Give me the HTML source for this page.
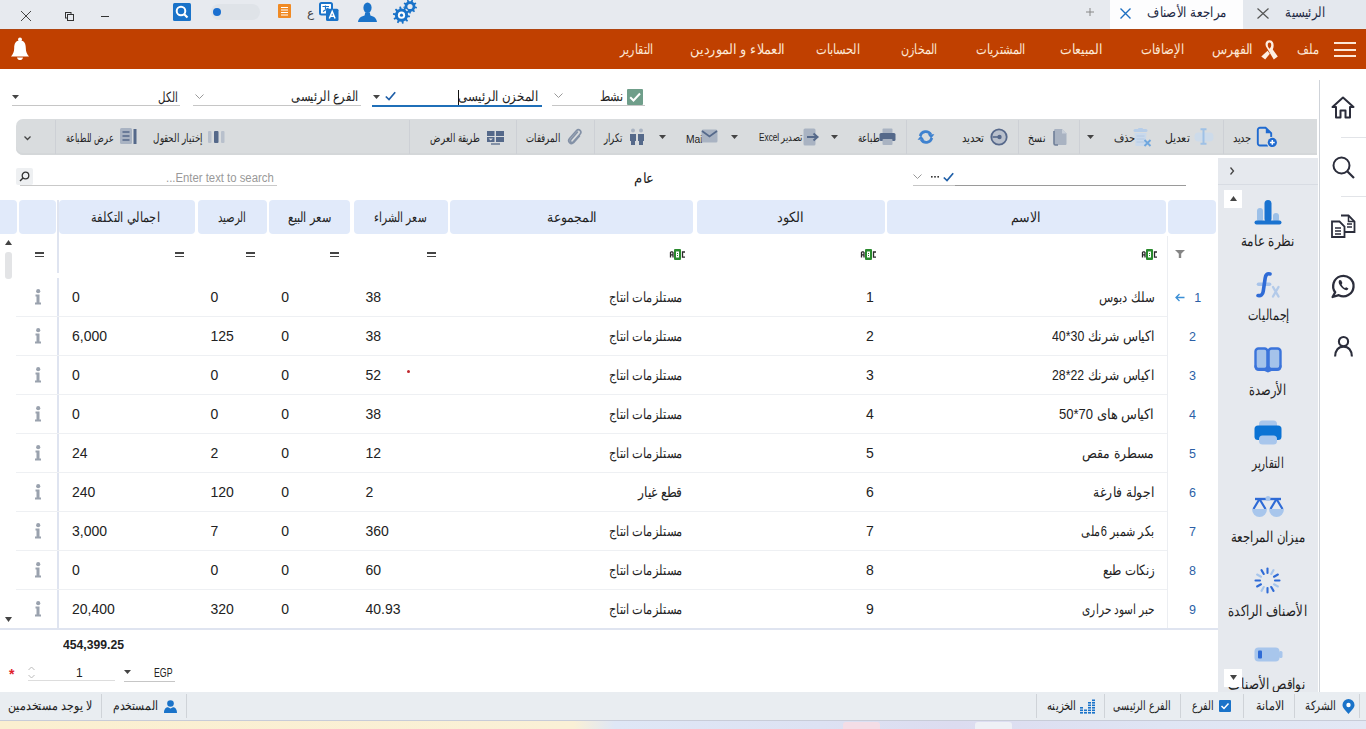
<!DOCTYPE html>
<html lang="ar"><head><meta charset="utf-8"><style>
*{box-sizing:border-box;margin:0;padding:0}
html,body{width:1366px;height:729px;overflow:hidden;background:#fff;font-family:"Liberation Sans",sans-serif;color:#222}
body{position:relative}
.a{position:absolute}
.t{position:absolute;white-space:nowrap;line-height:20px;height:20px}
svg{overflow:visible}
</style></head><body>
<div class="a" style="left:0px;top:0px;width:1366px;height:29px;background:#e7eaef"></div>
<div class="a" style="left:1243px;top:0px;width:123px;height:28px;background:#e4e8ee;border-radius:0 0 0 4px"></div>
<div class="a" style="left:1110px;top:0px;width:133px;height:29px;background:#fdfdfe"></div>
<div class="t" style="left:1285px;top:1.5px;font-size:14px;color:#1f2a44;font-weight:normal;direction:rtl;transform:scaleX(0.8333);transform-origin:0 0;">الرئيسية</div>
<div class="t" style="left:1147px;top:1.5px;font-size:14px;color:#1f2a44;font-weight:normal;direction:rtl;transform:scaleX(0.8431);transform-origin:0 0;">مراجعة الأصناف</div>
<svg class="a" style="left:1257px;top:8px" width="12" height="11" viewBox="0 0 12 11"><path d="M0.5 0.5L11.5 10.5M11.5 0.5L0.5 10.5" stroke="#555" stroke-width="1.2" fill="none"/></svg>
<svg class="a" style="left:1120px;top:8px" width="11" height="11" viewBox="0 0 11 11"><path d="M0.5 0.5L10.5 10.5M10.5 0.5L0.5 10.5" stroke="#1d6fc2" stroke-width="1.4" fill="none"/></svg>
<svg class="a" style="left:1086px;top:8px" width="8" height="8" viewBox="0 0 8 8"><path d="M4 0V8M0 4H8" stroke="#888" stroke-width="1" fill="none"/></svg>
<svg class="a" style="left:21px;top:11px" width="10" height="10" viewBox="0 0 10 10"><path d="M0 0L10 10M10 0L0 10" stroke="#444" stroke-width="1" fill="none"/></svg>
<svg class="a" style="left:65px;top:12px" width="9" height="9" viewBox="0 0 9 9"><rect x="0.5" y="0.5" width="5.5" height="5.5" fill="none" stroke="#333" stroke-width="1"/><rect x="2.5" y="2.5" width="6" height="6" fill="#e7eaef" stroke="#333" stroke-width="1"/></svg>
<div class="a" style="left:101px;top:15.5px;width:8px;height:1px;background:#333"></div>
<svg class="a" style="left:173px;top:3px" width="18" height="18" viewBox="0 0 18 18"><rect width="18" height="18" rx="1.5" fill="#1a73c9"/><circle cx="8" cy="8" r="4.3" fill="none" stroke="#fff" stroke-width="2"/><path d="M11 11L14.5 14.5" stroke="#fff" stroke-width="2.2"/></svg>
<div class="a" style="left:211px;top:4px;width:49px;height:16px;background:#dfe3e8;border-radius:8px"></div>
<div class="a" style="left:213px;top:8px;width:8px;height:8px;background:#1a6fd0;border-radius:50%"></div>
<svg class="a" style="left:278px;top:4px" width="13" height="14" viewBox="0 0 13 14"><rect width="13" height="14" rx="1" fill="#f08a24"/><path d="M3 3.5H10M3 6H10M3 8.5H10M3 11H10" stroke="#fff" stroke-width="1.1"/></svg>
<div class="t" style="left:307px;top:3.0px;font-size:12px;color:#444;font-weight:normal;direction:rtl;">ع</div>
<svg class="a" style="left:319px;top:2px" width="20" height="20" viewBox="0 0 20 20"><rect x="1" y="1" width="12" height="11.5" rx="1.5" fill="#fff" stroke="#1a73c9" stroke-width="2"/><path d="M3.5 4.5H10M6.5 3.5V7M4 9.5L9.5 6" stroke="#1a73c9" stroke-width="1.2" fill="none"/><rect x="7" y="6.8" width="12.5" height="12.2" rx="1.5" fill="#1a73c9"/><path d="M10.3 16.5L13.2 9.5L16.1 16.5M11.3 14.2H15.1" stroke="#fff" stroke-width="1.5" fill="none"/></svg>
<svg class="a" style="left:358px;top:2px" width="19" height="20" viewBox="0 0 19 20"><ellipse cx="9.5" cy="5.8" rx="4.1" ry="5.2" fill="#1a73c9"/><path d="M0 20C0.4 16.2 2.6 14.6 6.6 13.4L7.2 10.5H11.8L12.4 13.4C16.4 14.6 18.6 16.2 19 20Z" fill="#1a73c9"/></svg>
<svg class="a" style="left:393px;top:0px" width="25" height="24" viewBox="0 0 25 24"><path d="M22.40 6.50L23.98 6.99L23.73 8.43L22.07 8.35L21.14 9.97L22.04 11.36L20.91 12.30L19.70 11.18L17.94 11.82L17.73 13.46L16.27 13.46L16.06 11.82L14.30 11.18L13.09 12.30L11.96 11.36L12.86 9.97L11.93 8.35L10.27 8.43L10.02 6.99L11.60 6.50L11.93 4.65L10.61 3.65L11.34 2.39L12.86 3.03L14.30 1.82L13.93 0.21L15.31 -0.29L16.06 1.18L17.94 1.18L18.69 -0.29L20.07 0.21L19.70 1.82L21.14 3.03L22.66 2.39L23.39 3.65L22.07 4.65Z" fill="#1a73c9"/><circle cx="17" cy="6.5" r="2.6" fill="#e7eaef"/><circle cx="8.5" cy="15.2" r="8" fill="#e7eaef"/><path d="M15.10 15.20L17.08 15.74L16.83 17.34L14.78 17.24L13.84 19.08L15.13 20.68L13.98 21.83L12.38 20.54L10.54 21.48L10.64 23.53L9.04 23.78L8.50 21.80L6.46 21.48L5.33 23.20L3.89 22.46L4.62 20.54L3.16 19.08L1.24 19.81L0.50 18.37L2.22 17.24L1.90 15.20L-0.08 14.66L0.17 13.06L2.22 13.16L3.16 11.32L1.87 9.72L3.02 8.57L4.62 9.86L6.46 8.92L6.36 6.87L7.96 6.62L8.50 8.60L10.54 8.92L11.67 7.20L13.11 7.94L12.38 9.86L13.84 11.32L15.76 10.59L16.50 12.03L14.78 13.16Z" fill="#1a73c9"/><circle cx="8.5" cy="15.2" r="3.6" fill="#fff"/><circle cx="8.5" cy="15.2" r="1.6" fill="#1a73c9"/></svg>
<div class="a" style="left:0px;top:29px;width:1366px;height:40px;background:#c04000"></div>
<div class="a" style="left:0px;top:29px;width:1366px;height:1px;background:#b04510"></div>
<div class="t" style="left:1297px;top:38.5px;font-size:14px;color:#fde8d6;font-weight:normal;direction:rtl;transform:scaleX(0.8214);transform-origin:0 0;">ملف</div>
<div class="t" style="left:1212px;top:38.5px;font-size:14px;color:#fde8d6;font-weight:normal;direction:rtl;transform:scaleX(0.8913);transform-origin:0 0;">الفهرس</div>
<div class="t" style="left:1141px;top:38.5px;font-size:14px;color:#fde8d6;font-weight:normal;direction:rtl;transform:scaleX(0.8269);transform-origin:0 0;">الإضافات</div>
<div class="t" style="left:1060px;top:38.5px;font-size:14px;color:#fde8d6;font-weight:normal;direction:rtl;transform:scaleX(0.8854);transform-origin:0 0;">المبيعات</div>
<div class="t" style="left:976px;top:38.5px;font-size:14px;color:#fde8d6;font-weight:normal;direction:rtl;transform:scaleX(0.8131);transform-origin:0 0;">المشتريات</div>
<div class="t" style="left:901px;top:38.5px;font-size:14px;color:#fde8d6;font-weight:normal;direction:rtl;transform:scaleX(0.7935);transform-origin:0 0;">المخازن</div>
<div class="t" style="left:816px;top:38.5px;font-size:14px;color:#fde8d6;font-weight:normal;direction:rtl;transform:scaleX(0.8148);transform-origin:0 0;">الحسابات</div>
<div class="t" style="left:690px;top:38.5px;font-size:14px;color:#fde8d6;font-weight:normal;direction:rtl;transform:scaleX(0.9154);transform-origin:0 0;">العملاء و الموردين</div>
<div class="t" style="left:620px;top:38.5px;font-size:14px;color:#fde8d6;font-weight:normal;direction:rtl;transform:scaleX(0.7857);transform-origin:0 0;">التقارير</div>
<div class="a" style="left:1334px;top:42px;width:22px;height:2px;background:#fde8d6"></div>
<div class="a" style="left:1334px;top:48.5px;width:22px;height:2px;background:#fde8d6"></div>
<div class="a" style="left:1334px;top:55px;width:22px;height:2px;background:#fde8d6"></div>
<svg class="a" style="left:1261px;top:39px" width="17" height="21" viewBox="0 0 17 21"><path d="M8.5 1.2C4.8 1.2 3.8 4.5 5 7.5L12.8 20.5L16.8 17.5L11.8 10.5C13.5 6.5 12.8 1.2 8.5 1.2ZM8.5 3.6C10.3 3.6 10.6 6 9.8 8L8.5 9.8L7.2 8C6.4 6 6.7 3.6 8.5 3.6Z" fill="#fdeee2" fill-rule="evenodd"/><path d="M6.6 11.8L0.3 17.5L4.2 20.5L8.8 14.8Z" fill="#fdeee2"/></svg>
<svg class="a" style="left:10px;top:37px" width="20" height="24" viewBox="0 0 20 24"><circle cx="10" cy="2.6" r="2" fill="#fff"/><path d="M10 3.5C5.5 3.5 4.2 7 4.2 11C4.2 15 3 17 1 19.5H19C17 17 15.8 15 15.8 11C15.8 7 14.5 3.5 10 3.5Z" fill="#fff"/><path d="M7 20.5H13C12.5 22.5 11.5 23 10 23C8.5 23 7.5 22.5 7 20.5Z" fill="#fff"/></svg>
<div class="a" style="left:1319px;top:80px;width:1px;height:612px;background:#cfd3d9"></div>
<svg class="a" style="left:1331px;top:96px" width="24" height="23" viewBox="0 0 24 23"><path d="M12 1.5L1.5 11H5V21.5H9.5V14.5H14.5V21.5H19V11H22.5Z" fill="none" stroke="#2b2d3b" stroke-width="2" stroke-linejoin="round"/></svg>
<div class="a" style="left:1341px;top:137px;width:25px;height:1px;background:#e2e4e8"></div>
<svg class="a" style="left:1332px;top:156px" width="23" height="23" viewBox="0 0 23 23"><circle cx="9.5" cy="9.5" r="8" fill="none" stroke="#2b2d3b" stroke-width="2"/><path d="M15.5 15.5L22 22" stroke="#2b2d3b" stroke-width="2.2"/></svg>
<div class="a" style="left:1341px;top:196px;width:25px;height:1px;background:#e2e4e8"></div>
<svg class="a" style="left:1331px;top:214px" width="25" height="24" viewBox="0 0 25 24"><path d="M10 1.5H17.5L23.5 7.5V18H14" fill="none" stroke="#2b2d3b" stroke-width="1.8"/><path d="M17.5 1.5V7.5H23.5" fill="none" stroke="#2b2d3b" stroke-width="1.5"/><path d="M1 7.5H8.5L13.5 12.5V23H1Z" fill="#fff" stroke="#2b2d3b" stroke-width="1.8"/><path d="M4 14H10M4 17H10M4 20H10M16 10H21M16 13H21" stroke="#2b2d3b" stroke-width="1.4"/></svg>
<svg class="a" style="left:1331px;top:274px" width="25" height="24" viewBox="0 0 25 24"><path d="M4.2 18.2A10.2 10.2 0 1 1 7.8 21.2L1.6 23Z" fill="none" stroke="#2b2d3b" stroke-width="2.3" stroke-linejoin="round"/><path d="M8.3 6.2C7.5 7 7.2 8.8 9 11.6C10.8 14.4 13.6 16.4 15.6 16.2C16.6 16.1 17.3 15.3 17.4 14.6L15.3 13.2L13.9 14C12.4 13.2 11.2 11.8 10.6 10.4L11.4 9.1L10.3 6.6C9.8 6 8.8 5.8 8.3 6.2Z" fill="#2b2d3b"/></svg>
<svg class="a" style="left:1334px;top:336px" width="19" height="21" viewBox="0 0 19 21"><circle cx="9.5" cy="5.6" r="4.6" fill="none" stroke="#2b2d3b" stroke-width="2.1"/><path d="M1.1 20.5C1.1 14.5 4.5 10.6 9.5 10.6C14.5 10.6 17.9 14.5 17.9 20.5" fill="none" stroke="#2b2d3b" stroke-width="2.1"/></svg>
<div class="a" style="left:627px;top:89px;width:16px;height:16px;background:#6f9e8a;border-radius:1px"></div>
<svg class="a" style="left:627px;top:89px" width="16" height="16" viewBox="0 0 16 16"><path d="M3.2 8.2L6.5 11.5L13 4.5" fill="none" stroke="#fff" stroke-width="2"/></svg>
<div class="t" style="left:600px;top:85.5px;font-size:14px;color:#222;font-weight:normal;direction:rtl;transform:scaleX(0.7931);transform-origin:0 0;">نشط</div>
<div class="a" style="left:552px;top:105px;width:93px;height:1px;background:#c6c6c6"></div>
<svg class="a" style="left:554px;top:93px" width="9" height="5" viewBox="0 0 9 5"><path d="M0.5 0.5L4.5 4.5L8.5 0.5" fill="none" stroke="#999" stroke-width="1"/></svg>
<div class="t" style="left:458px;top:85.5px;font-size:14px;color:#222;font-weight:normal;direction:rtl;transform:scaleX(0.8431);transform-origin:0 0;">المخزن الرئيسى</div>
<div class="a" style="left:458px;top:90px;width:1px;height:15px;background:#111"></div>
<div class="a" style="left:372px;top:105px;width:170px;height:2px;background:#1f6fb8"></div>
<svg class="a" style="left:373px;top:95px" width="7" height="4" viewBox="0 0 7 4"><path d="M0 0H7L3.5 4Z" fill="#444"/></svg>
<svg class="a" style="left:385px;top:91px" width="11" height="10" viewBox="0 0 11 10"><path d="M0.8 5.5L4 8.5L10.2 1.2" fill="none" stroke="#1f5fa8" stroke-width="1.7"/></svg>
<div class="t" style="left:291px;top:85.9px;font-size:14px;color:#222;font-weight:normal;direction:rtl;transform:scaleX(0.8083);transform-origin:0 0;">الفرع الرئيسى</div>
<div class="a" style="left:193px;top:105px;width:168px;height:1px;background:#c6c6c6"></div>
<svg class="a" style="left:195px;top:94px" width="9" height="5" viewBox="0 0 9 5"><path d="M0.5 0.5L4.5 4.5L8.5 0.5" fill="none" stroke="#999" stroke-width="1"/></svg>
<div class="t" style="left:157.6px;top:86.5px;font-size:14px;color:#222;font-weight:normal;direction:rtl;transform:scaleX(0.7296);transform-origin:0 0;">الكل</div>
<div class="a" style="left:12px;top:105px;width:168px;height:1px;background:#c6c6c6"></div>
<svg class="a" style="left:12px;top:95px" width="7" height="4" viewBox="0 0 7 4"><path d="M0 0H7L3.5 4Z" fill="#444"/></svg>
<div class="a" style="left:16px;top:119px;width:1301px;height:36px;background:#d9dcde;border-radius:7px 0 0 7px;box-shadow:inset 0 -2px 0 #d4d7d9"></div>
<div class="a" style="left:55px;top:120px;width:1px;height:34px;background:#cdd0d5"></div>
<div class="a" style="left:409px;top:120px;width:1px;height:34px;background:#cdd0d5"></div>
<div class="a" style="left:516px;top:120px;width:1px;height:34px;background:#cdd0d5"></div>
<div class="a" style="left:594px;top:120px;width:1px;height:34px;background:#cdd0d5"></div>
<div class="a" style="left:906px;top:120px;width:1px;height:34px;background:#cdd0d5"></div>
<div class="a" style="left:1018px;top:120px;width:1px;height:34px;background:#cdd0d5"></div>
<div class="a" style="left:1079px;top:120px;width:1px;height:34px;background:#cdd0d5"></div>
<div class="a" style="left:1223px;top:120px;width:1px;height:34px;background:#cdd0d5"></div>
<div class="t" style="left:1233px;top:127.6px;font-size:12px;color:#222;font-weight:normal;direction:rtl;transform:scaleX(0.8182);transform-origin:0 0;">جديد</div>
<div class="t" style="left:1164.6px;top:127.6px;font-size:12px;color:#222;font-weight:normal;direction:rtl;transform:scaleX(0.9037);transform-origin:0 0;">تعديل</div>
<div class="t" style="left:1114px;top:127.6px;font-size:12px;color:#222;font-weight:normal;direction:rtl;transform:scaleX(0.8280);transform-origin:0 0;">حذف</div>
<div class="t" style="left:1027.8px;top:127.6px;font-size:12px;color:#222;font-weight:normal;direction:rtl;transform:scaleX(0.7818);transform-origin:0 0;">نسخ</div>
<div class="t" style="left:961.8px;top:127.6px;font-size:12px;color:#222;font-weight:normal;direction:rtl;transform:scaleX(0.8423);transform-origin:0 0;">تحديد</div>
<div class="t" style="left:858px;top:127.6px;font-size:12px;color:#222;font-weight:normal;direction:rtl;transform:scaleX(0.7097);transform-origin:0 0;">طباعة</div>
<div class="t" style="left:758.5px;top:127.1px;font-size:11px;color:#222;font-weight:normal;direction:rtl;transform:scaleX(0.7504);transform-origin:0 0;">تصدير Excel</div>
<div class="t" style="left:686.4px;top:128.6px;font-size:11px;color:#222;font-weight:normal;transform:scaleX(0.9360);transform-origin:0 0;">Mai</div>
<div class="t" style="left:603.6px;top:127.6px;font-size:12px;color:#222;font-weight:normal;direction:rtl;transform:scaleX(0.7000);transform-origin:0 0;">تكرار</div>
<div class="t" style="left:525.6px;top:127.6px;font-size:12px;color:#222;font-weight:normal;direction:rtl;transform:scaleX(0.7167);transform-origin:0 0;">المرفقات</div>
<div class="t" style="left:430px;top:127.6px;font-size:12px;color:#222;font-weight:normal;direction:rtl;transform:scaleX(0.7179);transform-origin:0 0;">طريقة العرض</div>
<div class="t" style="left:152.8px;top:127.6px;font-size:12px;color:#222;font-weight:normal;direction:rtl;transform:scaleX(0.7306);transform-origin:0 0;">إختيار الحقول</div>
<div class="t" style="left:65.6px;top:127.6px;font-size:12px;color:#222;font-weight:normal;direction:rtl;transform:scaleX(0.6714);transform-origin:0 0;">عرض للطباعة</div>
<svg class="a" style="left:1087px;top:135px" width="7" height="4" viewBox="0 0 7 4"><path d="M0 0H7L3.5 4Z" fill="#444"/></svg>
<svg class="a" style="left:831px;top:135px" width="7" height="4" viewBox="0 0 7 4"><path d="M0 0H7L3.5 4Z" fill="#444"/></svg>
<svg class="a" style="left:731px;top:135px" width="7" height="4" viewBox="0 0 7 4"><path d="M0 0H7L3.5 4Z" fill="#444"/></svg>
<svg class="a" style="left:659px;top:135px" width="7" height="4" viewBox="0 0 7 4"><path d="M0 0H7L3.5 4Z" fill="#444"/></svg>
<svg class="a" style="left:24px;top:136px" width="7" height="5" viewBox="0 0 7 5"><path d="M0.5 0.5L3.5 3.5L6.5 0.5" fill="none" stroke="#444" stroke-width="1.3"/></svg>
<svg class="a" style="left:1256px;top:126px" width="22" height="22" viewBox="0 0 22 22"><path d="M12 19.5H4C2.8 19.5 1.8 18.5 1.8 17.3V4C1.8 2.8 2.8 1.8 4 1.8H9.8L15.2 7.2V11" fill="none" stroke="#1f6ad0" stroke-width="1.9" stroke-linejoin="round"/><path d="M9.8 1.8V7.2H15.2Z" fill="#1f6ad0"/><circle cx="16.3" cy="16.4" r="5.6" fill="#d9dcde"/><circle cx="16.3" cy="16.4" r="4.6" fill="#1f6ad0"/><path d="M16.3 14V18.8M13.9 16.4H18.7" stroke="#fff" stroke-width="1.5"/></svg>
<svg class="a" style="left:1194px;top:128px" width="20" height="17" viewBox="0 0 20 17"><rect x="0.5" y="4.5" width="19" height="9" rx="4" fill="#cddbea"/><path d="M9.5 1.5V15.5M6.5 1.2H12.5M6.5 15.8H12.5" stroke="#9fc1e6" stroke-width="2"/></svg>
<svg class="a" style="left:1133px;top:128px" width="19" height="20" viewBox="0 0 19 20"><rect x="0.5" y="1" width="14" height="3" rx="1.5" fill="#b6cde8"/><rect x="5" y="0" width="5" height="2" rx="1" fill="#b6cde8"/><path d="M1.5 5H13.5L12.5 18H2.5Z" fill="#c9d9ec"/><path d="M3.5 8H11.5M3.5 11H11.5M3.5 14H11.5" stroke="#b4c9e2" stroke-width="1"/><path d="M11.5 12L17.5 18M17.5 12L11.5 18" stroke="#6fa7de" stroke-width="1.9"/></svg>
<svg class="a" style="left:1053px;top:128px" width="14" height="18" viewBox="0 0 14 18"><path d="M2.5 1H9L13.5 5.5V15.5C13.5 16.5 13 17 12 17H2.5C1.5 17 1 16.5 1 15.5V2.5C1 1.5 1.5 1 2.5 1Z" fill="#a9b3c2"/><path d="M1 3V15.5C1 16.5 1.5 17 2.5 17H5" fill="none" stroke="#6f7f98" stroke-width="1.6"/><path d="M9 1V5.5H13.5" fill="#c9d0d9"/></svg>
<svg class="a" style="left:990px;top:128px" width="18" height="18" viewBox="0 0 18 18"><circle cx="9" cy="9" r="7.7" fill="#b9c0cc" stroke="#56688a" stroke-width="1.8"/><circle cx="9.5" cy="9" r="2.2" fill="#56688a"/><path d="M2.5 8.2H9.5V9.8H2.5Z" fill="#56688a"/></svg>
<svg class="a" style="left:917px;top:129px" width="18" height="16" viewBox="0 0 18 16"><path d="M3.2 7A5.8 5.8 0 0 1 13.8 5.5" fill="none" stroke="#3f82cf" stroke-width="2.8"/><path d="M10.8 5.2H17.4L14.1 9.6Z" fill="#3f82cf"/><path d="M14.8 9A5.8 5.8 0 0 1 4.2 10.5" fill="none" stroke="#3f82cf" stroke-width="2.8"/><path d="M0.6 10.8H7.2L3.9 6.4Z" fill="#3f82cf"/></svg>
<svg class="a" style="left:879px;top:128px" width="17" height="18" viewBox="0 0 17 18"><rect x="3.5" y="0.5" width="10" height="5" rx="1" fill="#a9b3c2"/><rect x="0.5" y="5" width="16" height="8" rx="1.5" fill="#55698a"/><rect x="3.5" y="11" width="10" height="6" rx="1" fill="#a9b3c2"/></svg>
<svg class="a" style="left:803px;top:128px" width="16" height="18" viewBox="0 0 16 18"><rect x="0.5" y="0.5" width="12" height="17" rx="1.5" fill="#a9b3c2"/><path d="M4 9H13M10.5 5.5L14.5 9L10.5 12.5" fill="none" stroke="#55698a" stroke-width="2"/></svg>
<svg class="a" style="left:701px;top:129px" width="17" height="14" viewBox="0 0 17 14"><rect x="0.5" y="0.5" width="16" height="13" rx="1.5" fill="#a9b3c2"/><path d="M1 2L8.5 7.5L16 2" fill="none" stroke="#55698a" stroke-width="1.8"/></svg>
<svg class="a" style="left:629px;top:128px" width="16" height="18" viewBox="0 0 16 18"><circle cx="4" cy="2.5" r="2" fill="#a9b3c2"/><circle cx="12" cy="2.5" r="2" fill="#a9b3c2"/><path d="M1 6H7V13H6V17H2V13H1Z" fill="#55698a"/><path d="M9 6H15V13H14V17H10V13H9Z" fill="#55698a"/></svg>
<svg class="a" style="left:567px;top:128px" width="16" height="18" viewBox="0 0 16 18"><path d="M10.5 4L4 11.5C2.5 13.3 4.5 15.5 6.3 13.8L13 6.3C15.5 3.5 12 0 9.3 2.7L2.5 10.5C0 13.5 3.8 17.5 6.8 14.5L12.5 8" fill="none" stroke="#8391a6" stroke-width="1.6" stroke-linecap="round"/></svg>
<svg class="a" style="left:487px;top:131px" width="17" height="14" viewBox="0 0 17 14"><rect x="0" y="0" width="7.5" height="5" fill="#55698a"/><rect x="9" y="0" width="8" height="5" fill="#55698a"/><rect x="0" y="6" width="7.5" height="5" fill="#55698a"/><rect x="9" y="6" width="8" height="5" fill="#55698a"/><rect x="4" y="12" width="9" height="2" fill="#8391a6"/><path d="M1.5 7.5H6L3.75 9.5Z" fill="#dcdfe3"/></svg>
<svg class="a" style="left:120px;top:128px" width="17" height="16" viewBox="0 0 17 16"><rect x="0" y="0" width="12" height="16" rx="1.5" fill="#a9b3c2"/><path d="M2.5 4H9.5M2.5 8H9.5M2.5 12H9.5" stroke="#55698a" stroke-width="1.6"/><rect x="13.5" y="1" width="3" height="15" fill="#55698a"/></svg>
<svg class="a" style="left:208px;top:131px" width="17" height="12" viewBox="0 0 17 12"><rect x="0" y="0" width="3.5" height="12" rx="1" fill="#b8c0cc"/><rect x="6" y="0" width="4.5" height="12" rx="1" fill="#55698a"/><rect x="13" y="0" width="3.5" height="12" rx="1" fill="#b8c0cc"/></svg>
<div class="a" style="left:16px;top:168px;width:17px;height:17px;background:#eef0f2;border-radius:2px"></div>
<svg class="a" style="left:19px;top:171px" width="11" height="11" viewBox="0 0 11 11"><circle cx="6.5" cy="4.5" r="3.3" fill="none" stroke="#333" stroke-width="1.3"/><path d="M4 7L1 10" stroke="#333" stroke-width="1.5"/></svg>
<div class="t" style="left:166px;top:167.5px;font-size:12px;color:#999;font-weight:normal;direction:rtl;transform:scaleX(0.9441);transform-origin:0 0;">Enter text to search...</div>
<div class="a" style="left:20px;top:185px;width:257px;height:1px;background:#c9c9c9"></div>
<div class="t" style="left:633.7px;top:167.5px;font-size:14px;color:#222;font-weight:normal;direction:rtl;transform:scaleX(0.9476);transform-origin:0 0;">عام</div>
<div class="a" style="left:913px;top:185px;width:273px;height:1px;background:#c6c6c6"></div>
<div class="a" style="left:955px;top:185px;width:231px;height:1.2px;background:#9a9a9a"></div>
<svg class="a" style="left:913px;top:174px" width="9" height="5" viewBox="0 0 9 5"><path d="M0.5 0.5L4.5 4.5L8.5 0.5" fill="none" stroke="#999" stroke-width="1"/></svg>
<svg class="a" style="left:931px;top:176px" width="8" height="2" viewBox="0 0 8 2"><rect x="0" y="0" width="1.6" height="1.6" fill="#333"/><rect x="3.2" y="0" width="1.6" height="1.6" fill="#333"/><rect x="6.4" y="0" width="1.6" height="1.6" fill="#333"/></svg>
<svg class="a" style="left:943px;top:172px" width="11" height="10" viewBox="0 0 11 10"><path d="M0.8 5.5L4 8.5L10.2 1.2" fill="none" stroke="#1f5fa8" stroke-width="1.7"/></svg>
<div class="a" style="left:1218px;top:158px;width:100px;height:534px;background:#e6e9ee"></div>
<div class="a" style="left:1218px;top:184px;width:100px;height:1px;background:#d8dce3"></div>
<svg class="a" style="left:1230px;top:167px" width="4" height="8" viewBox="0 0 4 8"><path d="M0.5 0.5L3.5 4L0.5 7.5" fill="none" stroke="#444" stroke-width="1.3"/></svg>
<div class="a" style="left:1224px;top:190px;width:18px;height:18px;background:#fff"></div>
<svg class="a" style="left:1230px;top:196px" width="7" height="5" viewBox="0 0 7 5"><path d="M0 5H7L3.5 0Z" fill="#444"/></svg>
<div class="t" style="left:1241px;top:231.4px;font-size:15px;color:#222;font-weight:normal;direction:rtl;transform:scaleX(0.8009);transform-origin:0 0;">نظرة عامة</div>
<div class="t" style="left:1247.6px;top:305.4px;font-size:15px;color:#222;font-weight:normal;direction:rtl;transform:scaleX(0.7393);transform-origin:0 0;">إجماليات</div>
<div class="t" style="left:1249px;top:379.6px;font-size:15px;color:#222;font-weight:normal;direction:rtl;transform:scaleX(0.7551);transform-origin:0 0;">الأرصدة</div>
<div class="t" style="left:1251.6px;top:453.0px;font-size:15px;color:#222;font-weight:normal;direction:rtl;transform:scaleX(0.6891);transform-origin:0 0;">التقارير</div>
<div class="t" style="left:1231.2px;top:527.2px;font-size:15px;color:#222;font-weight:normal;direction:rtl;transform:scaleX(0.7837);transform-origin:0 0;">ميزان المراجعة</div>
<div class="t" style="left:1228.3px;top:600.6px;font-size:15px;color:#222;font-weight:normal;direction:rtl;transform:scaleX(0.7856);transform-origin:0 0;">الأصناف الراكدة</div>
<div class="t" style="left:1228.3px;top:674.0px;font-size:15px;color:#222;font-weight:normal;direction:rtl;transform:scaleX(0.7893);transform-origin:0 0;">نواقص الأصناف</div>
<div class="a" style="left:1224px;top:669px;width:18px;height:18px;background:#fff"></div>
<svg class="a" style="left:1230px;top:675px" width="7" height="5" viewBox="0 0 7 5"><path d="M0 0H7L3.5 5Z" fill="#444"/></svg>
<svg class="a" style="left:1254px;top:199px" width="28" height="26" viewBox="0 0 28 26"><rect x="3" y="9" width="6" height="14" rx="3" fill="#9cc0e8"/><rect x="19" y="14" width="6" height="9" rx="3" fill="#9cc0e8"/><rect x="10.5" y="1" width="7" height="22" rx="3.5" fill="#1a73d0"/><rect x="0.5" y="21.5" width="27" height="4" rx="2" fill="#1a73d0"/></svg>
<svg class="a" style="left:1255px;top:271px" width="26" height="27" viewBox="0 0 26 27"><path d="M3.5 13.3H14.5" stroke="#a9c4ea" stroke-width="3.6" stroke-linecap="round"/><path d="M15 3C12 2.2 10.6 4 10.2 7L8.2 20.5C7.8 23.5 6 25 3 24.5" fill="none" stroke="#2f6bd6" stroke-width="3.6" stroke-linecap="round"/><path d="M18 16L23.5 25.5M23.5 16L18 25.5" stroke="#b3cae9" stroke-width="2.4" stroke-linecap="round"/></svg>
<svg class="a" style="left:1254px;top:347px" width="28" height="25" viewBox="0 0 28 25"><rect x="1.5" y="1.5" width="12" height="20.5" rx="3" fill="#a5c3ea" stroke="#3b74db" stroke-width="2.4"/><rect x="14.5" y="1.5" width="12" height="20.5" rx="3" fill="#a5c3ea" stroke="#3b74db" stroke-width="2.4"/><path d="M1.5 18.5C1.5 22 3 22.8 5 22.8H11L14 24.2L17 22.8H23C25 22.8 26.5 22 26.5 18.5" fill="none" stroke="#3b74db" stroke-width="2.4"/><path d="M14 2V23" stroke="#3b74db" stroke-width="2.4"/></svg>
<svg class="a" style="left:1254px;top:420px" width="28" height="25" viewBox="0 0 28 25"><rect x="5" y="0.5" width="18" height="9" rx="3.5" fill="#a8c6ec"/><rect x="0.5" y="5.5" width="27" height="14.5" rx="3.5" fill="#0b73d4"/><rect x="5" y="15.5" width="18" height="9" rx="3.5" fill="#a8c6ec"/></svg>
<svg class="a" style="left:1251px;top:496px" width="34" height="23" viewBox="0 0 34 23"><path d="M4 3H30" stroke="#2f6bd6" stroke-width="2.4"/><circle cx="17" cy="2.5" r="2.5" fill="#a8c6ec"/><path d="M8.5 3L2.5 13M8.5 3L14.5 13M25.5 3L19.5 13M25.5 3L31.5 13" stroke="#2f6bd6" stroke-width="2.2"/><path d="M1 13H16A7.5 8 0 0 1 1 13Z" fill="#a8c6ec"/><path d="M18 13H33A7.5 8 0 0 1 18 13Z" fill="#a8c6ec"/></svg>
<svg class="a" style="left:1254px;top:568px" width="27" height="25" viewBox="0 0 27 25"><path d="M21.00 12.50L25.50 12.50" stroke="#2f6bd6" stroke-width="2.1" stroke-linecap="round"/><path d="M20.00 16.25L23.89 18.50" stroke="#a8c6ec" stroke-width="2.1" stroke-linecap="round"/><path d="M17.25 19.00L19.50 22.89" stroke="#2f6bd6" stroke-width="2.1" stroke-linecap="round"/><path d="M13.50 20.00L13.50 24.50" stroke="#2f6bd6" stroke-width="2.1" stroke-linecap="round"/><path d="M9.75 19.00L7.50 22.89" stroke="#a8c6ec" stroke-width="2.1" stroke-linecap="round"/><path d="M7.00 16.25L3.11 18.50" stroke="#2f6bd6" stroke-width="2.1" stroke-linecap="round"/><path d="M6.00 12.50L1.50 12.50" stroke="#2f6bd6" stroke-width="2.1" stroke-linecap="round"/><path d="M7.00 8.75L3.11 6.50" stroke="#a8c6ec" stroke-width="2.1" stroke-linecap="round"/><path d="M9.75 6.00L7.50 2.11" stroke="#2f6bd6" stroke-width="2.1" stroke-linecap="round"/><path d="M13.50 5.00L13.50 0.50" stroke="#2f6bd6" stroke-width="2.1" stroke-linecap="round"/><path d="M17.25 6.00L19.50 2.11" stroke="#a8c6ec" stroke-width="2.1" stroke-linecap="round"/><path d="M20.00 8.75L23.89 6.50" stroke="#2f6bd6" stroke-width="2.1" stroke-linecap="round"/></svg>
<svg class="a" style="left:1254px;top:647px" width="29" height="15" viewBox="0 0 29 15"><rect x="0.5" y="0.5" width="25" height="14" rx="4" fill="#a8c6ec"/><rect x="25" y="4" width="3.5" height="7" rx="1.5" fill="#a8c6ec"/><rect x="4" y="3.5" width="4" height="8" rx="1" fill="#2f6bd6"/></svg>
<div class="a" style="left:0px;top:200px;width:17px;height:34px;background:#e1eafa;border-radius:0 4px 4px 0"></div>
<div class="a" style="left:18.5px;top:200px;width:37.0px;height:34px;background:#e1eafa;border-radius:4px"></div>
<div class="a" style="left:59px;top:200px;width:136px;height:34px;background:#e1eafa;border-radius:4px"></div>
<div class="a" style="left:198px;top:200px;width:68.69999999999999px;height:34px;background:#e1eafa;border-radius:4px"></div>
<div class="a" style="left:269px;top:200px;width:81px;height:34px;background:#e1eafa;border-radius:4px"></div>
<div class="a" style="left:353.5px;top:200px;width:94.5px;height:34px;background:#e1eafa;border-radius:4px"></div>
<div class="a" style="left:450px;top:200px;width:243px;height:34px;background:#e1eafa;border-radius:4px"></div>
<div class="a" style="left:696.5px;top:200px;width:188.0px;height:34px;background:#e1eafa;border-radius:4px"></div>
<div class="a" style="left:887px;top:200px;width:279px;height:34px;background:#e1eafa;border-radius:4px"></div>
<div class="a" style="left:1168px;top:200px;width:48px;height:34px;background:#e1eafa;border-radius:4px"></div>
<div class="t" style="left:90.7px;top:207.3px;font-size:14px;color:#222;font-weight:normal;direction:rtl;transform:scaleX(0.8116);transform-origin:0 0;">اجمالي التكلفة</div>
<div class="t" style="left:218px;top:207.3px;font-size:14px;color:#222;font-weight:normal;direction:rtl;transform:scaleX(0.7179);transform-origin:0 0;">الرصيد</div>
<div class="t" style="left:288.4px;top:207.3px;font-size:14px;color:#222;font-weight:normal;direction:rtl;transform:scaleX(0.8035);transform-origin:0 0;">سعر البيع</div>
<div class="t" style="left:374px;top:207.3px;font-size:14px;color:#222;font-weight:normal;direction:rtl;transform:scaleX(0.7526);transform-origin:0 0;">سعر الشراء</div>
<div class="t" style="left:547px;top:207.3px;font-size:14px;color:#222;font-weight:normal;direction:rtl;transform:scaleX(0.8857);transform-origin:0 0;">المجموعة</div>
<div class="t" style="left:776.7px;top:207.3px;font-size:14px;color:#222;font-weight:normal;direction:rtl;transform:scaleX(0.9276);transform-origin:0 0;">الكود</div>
<div class="t" style="left:1011px;top:207.3px;font-size:14px;color:#222;font-weight:normal;direction:rtl;transform:scaleX(0.8970);transform-origin:0 0;">الاسم</div>
<div class="a" style="left:57px;top:200px;width:1.5px;height:73px;background:#dfe4f0"></div>
<div class="a" style="left:57px;top:278px;width:1.5px;height:351px;background:#dfe4f0"></div>
<div class="a" style="left:1167px;top:236px;width:1px;height:393px;background:#eceef2"></div>
<div class="a" style="left:35px;top:252px;width:9px;height:1.5px;background:#444"></div>
<div class="a" style="left:35px;top:255.5px;width:9px;height:1.5px;background:#444"></div>
<div class="a" style="left:175px;top:252px;width:9px;height:1.5px;background:#444"></div>
<div class="a" style="left:175px;top:255.5px;width:9px;height:1.5px;background:#444"></div>
<div class="a" style="left:246px;top:252px;width:9px;height:1.5px;background:#444"></div>
<div class="a" style="left:246px;top:255.5px;width:9px;height:1.5px;background:#444"></div>
<div class="a" style="left:330px;top:252px;width:9px;height:1.5px;background:#444"></div>
<div class="a" style="left:330px;top:255.5px;width:9px;height:1.5px;background:#444"></div>
<div class="a" style="left:427px;top:252px;width:9px;height:1.5px;background:#444"></div>
<div class="a" style="left:427px;top:255.5px;width:9px;height:1.5px;background:#444"></div>
<svg class="a" style="left:669px;top:249px" width="17" height="11" viewBox="0 0 17 11"><path d="M1.5 8.5V3.5L2.2 2.8H3.3L4 3.5V8.5M1.5 5.8H4" fill="none" stroke="#2a2a2a" stroke-width="1.3"/><rect x="5" y="0" width="7" height="11" rx="1" fill="#2a8a2e"/><rect x="7" y="2.5" width="3" height="6" fill="#fff"/><rect x="8" y="4" width="1" height="1" fill="#2a8a2e"/><rect x="8" y="6" width="1" height="1" fill="#2a8a2e"/><path d="M16 3H13.5V8.2H16" fill="none" stroke="#2a2a2a" stroke-width="1.3"/></svg>
<svg class="a" style="left:860px;top:249px" width="17" height="11" viewBox="0 0 17 11"><path d="M1.5 8.5V3.5L2.2 2.8H3.3L4 3.5V8.5M1.5 5.8H4" fill="none" stroke="#2a2a2a" stroke-width="1.3"/><rect x="5" y="0" width="7" height="11" rx="1" fill="#2a8a2e"/><rect x="7" y="2.5" width="3" height="6" fill="#fff"/><rect x="8" y="4" width="1" height="1" fill="#2a8a2e"/><rect x="8" y="6" width="1" height="1" fill="#2a8a2e"/><path d="M16 3H13.5V8.2H16" fill="none" stroke="#2a2a2a" stroke-width="1.3"/></svg>
<svg class="a" style="left:1141px;top:249px" width="17" height="11" viewBox="0 0 17 11"><path d="M1.5 8.5V3.5L2.2 2.8H3.3L4 3.5V8.5M1.5 5.8H4" fill="none" stroke="#2a2a2a" stroke-width="1.3"/><rect x="5" y="0" width="7" height="11" rx="1" fill="#2a8a2e"/><rect x="7" y="2.5" width="3" height="6" fill="#fff"/><rect x="8" y="4" width="1" height="1" fill="#2a8a2e"/><rect x="8" y="6" width="1" height="1" fill="#2a8a2e"/><path d="M16 3H13.5V8.2H16" fill="none" stroke="#2a2a2a" stroke-width="1.3"/></svg>
<svg class="a" style="left:1175px;top:250px" width="10" height="8" viewBox="0 0 10 8"><path d="M0 0H10L6.2 3.8V8H3.8V3.8Z" fill="#858585"/></svg>
<svg class="a" style="left:5px;top:240px" width="7" height="5" viewBox="0 0 7 5"><path d="M0 5H7L3.5 0Z" fill="#444"/></svg>
<div class="a" style="left:5px;top:252px;width:7px;height:27px;background:#e3e4e6;border-radius:3px"></div>
<svg class="a" style="left:5px;top:617px" width="7" height="5" viewBox="0 0 7 5"><path d="M0 0H7L3.5 5Z" fill="#444"/></svg>
<div class="a" style="left:16px;top:316px;width:1151px;height:1px;background:#eef0f3"></div>
<div class="t" style="left:1194.3px;top:287.5px;font-size:12.5px;color:#2c5fa6;font-weight:normal;">1</div>
<div class="t" style="left:1098.6px;top:286.5px;font-size:14px;color:#222;font-weight:normal;direction:rtl;transform:scaleX(0.8357);transform-origin:0 0;">سلك دبوس</div>
<div class="t" style="left:866px;top:287.0px;font-size:14px;color:#222;font-weight:normal;">1</div>
<div class="t" style="left:608.5px;top:286.9px;font-size:14px;color:#222;font-weight:normal;direction:rtl;transform:scaleX(0.8131);transform-origin:0 0;">مستلزمات انتاج</div>
<div class="t" style="left:365.5px;top:287.0px;font-size:14px;color:#222;font-weight:normal;">38</div>
<div class="t" style="left:281.3px;top:287.0px;font-size:14px;color:#222;font-weight:normal;">0</div>
<div class="t" style="left:210.4px;top:287.0px;font-size:14px;color:#222;font-weight:normal;">0</div>
<div class="t" style="left:72px;top:287.0px;font-size:14px;color:#222;font-weight:normal;">0</div>
<svg class="a" style="left:34px;top:288.8px" width="8" height="16" viewBox="0 0 8 16"><circle cx="4.2" cy="2.2" r="2.1" fill="#9aa2ae"/><path d="M1.5 5.5H5.5V13.5H7V15.5H1V13.5H2.5V7.5H1.5Z" fill="#9aa2ae"/></svg>
<div class="a" style="left:16px;top:355px;width:1151px;height:1px;background:#eef0f3"></div>
<div class="t" style="left:1189px;top:326.5px;font-size:12.5px;color:#2c5fa6;font-weight:normal;">2</div>
<div class="t" style="left:1051.9px;top:325.5px;font-size:14px;color:#222;font-weight:normal;direction:rtl;transform:scaleX(0.8815);transform-origin:0 0;">اكياس شرنك 30*40</div>
<div class="t" style="left:866px;top:326.0px;font-size:14px;color:#222;font-weight:normal;">2</div>
<div class="t" style="left:608.5px;top:325.9px;font-size:14px;color:#222;font-weight:normal;direction:rtl;transform:scaleX(0.8131);transform-origin:0 0;">مستلزمات انتاج</div>
<div class="t" style="left:365.5px;top:326.0px;font-size:14px;color:#222;font-weight:normal;">38</div>
<div class="t" style="left:281.3px;top:326.0px;font-size:14px;color:#222;font-weight:normal;">0</div>
<div class="t" style="left:210.4px;top:326.0px;font-size:14px;color:#222;font-weight:normal;">125</div>
<div class="t" style="left:72px;top:326.0px;font-size:14px;color:#222;font-weight:normal;">6,000</div>
<svg class="a" style="left:34px;top:327.8px" width="8" height="16" viewBox="0 0 8 16"><circle cx="4.2" cy="2.2" r="2.1" fill="#9aa2ae"/><path d="M1.5 5.5H5.5V13.5H7V15.5H1V13.5H2.5V7.5H1.5Z" fill="#9aa2ae"/></svg>
<div class="a" style="left:16px;top:394px;width:1151px;height:1px;background:#eef0f3"></div>
<div class="t" style="left:1189px;top:365.5px;font-size:12.5px;color:#2c5fa6;font-weight:normal;">3</div>
<div class="t" style="left:1052.4px;top:364.5px;font-size:14px;color:#222;font-weight:normal;direction:rtl;transform:scaleX(0.8772);transform-origin:0 0;">اكياس شرنك 22*28</div>
<div class="t" style="left:866px;top:365.0px;font-size:14px;color:#222;font-weight:normal;">3</div>
<div class="t" style="left:608.5px;top:364.9px;font-size:14px;color:#222;font-weight:normal;direction:rtl;transform:scaleX(0.8131);transform-origin:0 0;">مستلزمات انتاج</div>
<div class="t" style="left:365.5px;top:365.0px;font-size:14px;color:#222;font-weight:normal;">52</div>
<div class="t" style="left:281.3px;top:365.0px;font-size:14px;color:#222;font-weight:normal;">0</div>
<div class="t" style="left:210.4px;top:365.0px;font-size:14px;color:#222;font-weight:normal;">0</div>
<div class="t" style="left:72px;top:365.0px;font-size:14px;color:#222;font-weight:normal;">0</div>
<svg class="a" style="left:34px;top:366.8px" width="8" height="16" viewBox="0 0 8 16"><circle cx="4.2" cy="2.2" r="2.1" fill="#9aa2ae"/><path d="M1.5 5.5H5.5V13.5H7V15.5H1V13.5H2.5V7.5H1.5Z" fill="#9aa2ae"/></svg>
<div class="a" style="left:16px;top:433px;width:1151px;height:1px;background:#eef0f3"></div>
<div class="t" style="left:1189px;top:404.5px;font-size:12.5px;color:#2c5fa6;font-weight:normal;">4</div>
<div class="t" style="left:1059.3px;top:403.5px;font-size:14px;color:#222;font-weight:normal;direction:rtl;transform:scaleX(0.9298);transform-origin:0 0;">اكياس هاى 70*50</div>
<div class="t" style="left:866px;top:404.0px;font-size:14px;color:#222;font-weight:normal;">4</div>
<div class="t" style="left:608.5px;top:403.9px;font-size:14px;color:#222;font-weight:normal;direction:rtl;transform:scaleX(0.8131);transform-origin:0 0;">مستلزمات انتاج</div>
<div class="t" style="left:365.5px;top:404.0px;font-size:14px;color:#222;font-weight:normal;">38</div>
<div class="t" style="left:281.3px;top:404.0px;font-size:14px;color:#222;font-weight:normal;">0</div>
<div class="t" style="left:210.4px;top:404.0px;font-size:14px;color:#222;font-weight:normal;">0</div>
<div class="t" style="left:72px;top:404.0px;font-size:14px;color:#222;font-weight:normal;">0</div>
<svg class="a" style="left:34px;top:405.8px" width="8" height="16" viewBox="0 0 8 16"><circle cx="4.2" cy="2.2" r="2.1" fill="#9aa2ae"/><path d="M1.5 5.5H5.5V13.5H7V15.5H1V13.5H2.5V7.5H1.5Z" fill="#9aa2ae"/></svg>
<div class="a" style="left:16px;top:472px;width:1151px;height:1px;background:#eef0f3"></div>
<div class="t" style="left:1189px;top:443.5px;font-size:12.5px;color:#2c5fa6;font-weight:normal;">5</div>
<div class="t" style="left:1082.3px;top:442.5px;font-size:14px;color:#222;font-weight:normal;direction:rtl;transform:scaleX(0.8817);transform-origin:0 0;">مسطرة مقص</div>
<div class="t" style="left:866px;top:443.0px;font-size:14px;color:#222;font-weight:normal;">5</div>
<div class="t" style="left:608.5px;top:442.9px;font-size:14px;color:#222;font-weight:normal;direction:rtl;transform:scaleX(0.8131);transform-origin:0 0;">مستلزمات انتاج</div>
<div class="t" style="left:365.5px;top:443.0px;font-size:14px;color:#222;font-weight:normal;">12</div>
<div class="t" style="left:281.3px;top:443.0px;font-size:14px;color:#222;font-weight:normal;">0</div>
<div class="t" style="left:210.4px;top:443.0px;font-size:14px;color:#222;font-weight:normal;">2</div>
<div class="t" style="left:72px;top:443.0px;font-size:14px;color:#222;font-weight:normal;">24</div>
<svg class="a" style="left:34px;top:444.8px" width="8" height="16" viewBox="0 0 8 16"><circle cx="4.2" cy="2.2" r="2.1" fill="#9aa2ae"/><path d="M1.5 5.5H5.5V13.5H7V15.5H1V13.5H2.5V7.5H1.5Z" fill="#9aa2ae"/></svg>
<div class="a" style="left:16px;top:511px;width:1151px;height:1px;background:#eef0f3"></div>
<div class="t" style="left:1189px;top:482.5px;font-size:12.5px;color:#2c5fa6;font-weight:normal;">6</div>
<div class="t" style="left:1093.3px;top:481.5px;font-size:14px;color:#222;font-weight:normal;direction:rtl;transform:scaleX(0.8884);transform-origin:0 0;">اجولة فارغة</div>
<div class="t" style="left:866px;top:482.0px;font-size:14px;color:#222;font-weight:normal;">6</div>
<div class="t" style="left:638px;top:481.9px;font-size:14px;color:#222;font-weight:normal;direction:rtl;transform:scaleX(0.8725);transform-origin:0 0;">قطع غيار</div>
<div class="t" style="left:365.5px;top:482.0px;font-size:14px;color:#222;font-weight:normal;">2</div>
<div class="t" style="left:281.3px;top:482.0px;font-size:14px;color:#222;font-weight:normal;">0</div>
<div class="t" style="left:210.4px;top:482.0px;font-size:14px;color:#222;font-weight:normal;">120</div>
<div class="t" style="left:72px;top:482.0px;font-size:14px;color:#222;font-weight:normal;">240</div>
<svg class="a" style="left:34px;top:483.8px" width="8" height="16" viewBox="0 0 8 16"><circle cx="4.2" cy="2.2" r="2.1" fill="#9aa2ae"/><path d="M1.5 5.5H5.5V13.5H7V15.5H1V13.5H2.5V7.5H1.5Z" fill="#9aa2ae"/></svg>
<div class="a" style="left:16px;top:550px;width:1151px;height:1px;background:#eef0f3"></div>
<div class="t" style="left:1189px;top:521.5px;font-size:12.5px;color:#2c5fa6;font-weight:normal;">7</div>
<div class="t" style="left:1081.2px;top:520.5px;font-size:14px;color:#222;font-weight:normal;direction:rtl;transform:scaleX(0.7918);transform-origin:0 0;">بكر شمبر 6ملى</div>
<div class="t" style="left:866px;top:521.0px;font-size:14px;color:#222;font-weight:normal;">7</div>
<div class="t" style="left:608.5px;top:520.9px;font-size:14px;color:#222;font-weight:normal;direction:rtl;transform:scaleX(0.8131);transform-origin:0 0;">مستلزمات انتاج</div>
<div class="t" style="left:365.5px;top:521.0px;font-size:14px;color:#222;font-weight:normal;">360</div>
<div class="t" style="left:281.3px;top:521.0px;font-size:14px;color:#222;font-weight:normal;">0</div>
<div class="t" style="left:210.4px;top:521.0px;font-size:14px;color:#222;font-weight:normal;">7</div>
<div class="t" style="left:72px;top:521.0px;font-size:14px;color:#222;font-weight:normal;">3,000</div>
<svg class="a" style="left:34px;top:522.8px" width="8" height="16" viewBox="0 0 8 16"><circle cx="4.2" cy="2.2" r="2.1" fill="#9aa2ae"/><path d="M1.5 5.5H5.5V13.5H7V15.5H1V13.5H2.5V7.5H1.5Z" fill="#9aa2ae"/></svg>
<div class="a" style="left:16px;top:589px;width:1151px;height:1px;background:#eef0f3"></div>
<div class="t" style="left:1189px;top:560.5px;font-size:12.5px;color:#2c5fa6;font-weight:normal;">8</div>
<div class="t" style="left:1102.7px;top:559.5px;font-size:14px;color:#222;font-weight:normal;direction:rtl;transform:scaleX(0.8370);transform-origin:0 0;">زنكات طبع</div>
<div class="t" style="left:866px;top:560.0px;font-size:14px;color:#222;font-weight:normal;">8</div>
<div class="t" style="left:608.5px;top:559.9px;font-size:14px;color:#222;font-weight:normal;direction:rtl;transform:scaleX(0.8131);transform-origin:0 0;">مستلزمات انتاج</div>
<div class="t" style="left:365.5px;top:560.0px;font-size:14px;color:#222;font-weight:normal;">60</div>
<div class="t" style="left:281.3px;top:560.0px;font-size:14px;color:#222;font-weight:normal;">0</div>
<div class="t" style="left:210.4px;top:560.0px;font-size:14px;color:#222;font-weight:normal;">0</div>
<div class="t" style="left:72px;top:560.0px;font-size:14px;color:#222;font-weight:normal;">0</div>
<svg class="a" style="left:34px;top:561.8px" width="8" height="16" viewBox="0 0 8 16"><circle cx="4.2" cy="2.2" r="2.1" fill="#9aa2ae"/><path d="M1.5 5.5H5.5V13.5H7V15.5H1V13.5H2.5V7.5H1.5Z" fill="#9aa2ae"/></svg>
<div class="t" style="left:1189px;top:599.5px;font-size:12.5px;color:#2c5fa6;font-weight:normal;">9</div>
<div class="t" style="left:1081.7px;top:598.5px;font-size:14px;color:#222;font-weight:normal;direction:rtl;transform:scaleX(0.7522);transform-origin:0 0;">حبر اسود حرارى</div>
<div class="t" style="left:866px;top:599.0px;font-size:14px;color:#222;font-weight:normal;">9</div>
<div class="t" style="left:608.5px;top:598.9px;font-size:14px;color:#222;font-weight:normal;direction:rtl;transform:scaleX(0.8131);transform-origin:0 0;">مستلزمات انتاج</div>
<div class="t" style="left:365.5px;top:599.0px;font-size:14px;color:#222;font-weight:normal;">40.93</div>
<div class="t" style="left:281.3px;top:599.0px;font-size:14px;color:#222;font-weight:normal;">0</div>
<div class="t" style="left:210.4px;top:599.0px;font-size:14px;color:#222;font-weight:normal;">320</div>
<div class="t" style="left:72px;top:599.0px;font-size:14px;color:#222;font-weight:normal;">20,400</div>
<svg class="a" style="left:34px;top:600.8px" width="8" height="16" viewBox="0 0 8 16"><circle cx="4.2" cy="2.2" r="2.1" fill="#9aa2ae"/><path d="M1.5 5.5H5.5V13.5H7V15.5H1V13.5H2.5V7.5H1.5Z" fill="#9aa2ae"/></svg>
<svg class="a" style="left:1175px;top:293px" width="10" height="9" viewBox="0 0 10 9"><path d="M9.5 4.5H1M4.5 1L1 4.5L4.5 8" fill="none" stroke="#3b8fd6" stroke-width="1.3"/></svg>
<div class="a" style="left:407px;top:369.5px;width:3px;height:3px;background:#c0282d;border-radius:50%"></div>
<div class="a" style="left:0px;top:628px;width:1218px;height:1.5px;background:#dfe4f0"></div>
<div class="t" style="left:63.3px;top:634.7px;font-size:12px;color:#222;font-weight:bold;transform:scaleX(1.0156);transform-origin:0 0;">454,399.25</div>
<div class="t" style="left:9px;top:664.0px;font-size:14px;color:#e0202a;font-weight:bold;">*</div>
<svg class="a" style="left:28px;top:666px" width="7" height="13" viewBox="0 0 7 13"><path d="M0.5 4L3.5 1L6.5 4M0.5 9L3.5 12L6.5 9" fill="none" stroke="#bbb" stroke-width="1"/></svg>
<div class="t" style="left:75.9px;top:662.7px;font-size:12px;color:#222;font-weight:normal;">1</div>
<div class="a" style="left:28px;top:680px;width:87px;height:1px;background:#ddd"></div>
<svg class="a" style="left:124px;top:670px" width="7" height="4" viewBox="0 0 7 4"><path d="M0 0H7L3.5 4Z" fill="#444"/></svg>
<div class="t" style="left:153.5px;top:662.7px;font-size:12px;color:#222;font-weight:normal;transform:scaleX(0.7300);transform-origin:0 0;">EGP</div>
<div class="a" style="left:124px;top:681px;width:51px;height:1px;background:#c6c6c6"></div>
<div class="a" style="left:0px;top:692px;width:1366px;height:28px;background:#e9edf1"></div>
<div class="a" style="left:101px;top:694px;width:1px;height:24px;background:#cfd3d8"></div>
<div class="a" style="left:186px;top:694px;width:1px;height:24px;background:#cfd3d8"></div>
<div class="a" style="left:1036px;top:694px;width:1px;height:24px;background:#cfd3d8"></div>
<div class="a" style="left:1104px;top:694px;width:1px;height:24px;background:#cfd3d8"></div>
<div class="a" style="left:1180px;top:694px;width:1px;height:24px;background:#cfd3d8"></div>
<div class="a" style="left:1243px;top:694px;width:1px;height:24px;background:#cfd3d8"></div>
<div class="a" style="left:1294px;top:694px;width:1px;height:24px;background:#cfd3d8"></div>
<div class="a" style="left:1359px;top:694px;width:1px;height:24px;background:#cfd3d8"></div>
<div class="t" style="left:8px;top:696.1px;font-size:13px;color:#222;font-weight:normal;direction:rtl;transform:scaleX(0.8465);transform-origin:0 0;">لا يوجد مستخدمين</div>
<div class="t" style="left:112.5px;top:696.1px;font-size:13px;color:#222;font-weight:normal;direction:rtl;transform:scaleX(0.8255);transform-origin:0 0;">المستخدم</div>
<svg class="a" style="left:164px;top:700px" width="13" height="13" viewBox="0 0 13 13"><circle cx="6.5" cy="3.5" r="3.3" fill="#1a73c9"/><path d="M0 13C0 9 2 7.3 4 7.3L6.5 8.5L9 7.3C11 7.3 13 9 13 13Z" fill="#1a73c9"/></svg>
<div class="t" style="left:1046.6px;top:695.5px;font-size:13px;color:#222;font-weight:normal;direction:rtl;transform:scaleX(0.7789);transform-origin:0 0;">الخزينه</div>
<svg class="a" style="left:1080px;top:699px" width="16" height="15" viewBox="0 0 16 15"><rect x="0" y="13" width="3" height="1.6" fill="#1a73c9"/><rect x="0" y="10.5" width="3" height="1.6" fill="#1a73c9"/><rect x="0" y="8.0" width="3" height="1.6" fill="#1a73c9"/><rect x="4" y="13" width="3" height="1.6" fill="#1a73c9"/><rect x="4" y="10.5" width="3" height="1.6" fill="#1a73c9"/><rect x="8" y="13" width="3" height="1.6" fill="#1a73c9"/><rect x="8" y="10.5" width="3" height="1.6" fill="#1a73c9"/><rect x="8" y="8.0" width="3" height="1.6" fill="#1a73c9"/><rect x="8" y="5.5" width="3" height="1.6" fill="#1a73c9"/><rect x="8" y="3.0" width="3" height="1.6" fill="#1a73c9"/><rect x="12" y="13" width="3" height="1.6" fill="#1a73c9"/><rect x="12" y="10.5" width="3" height="1.6" fill="#1a73c9"/><rect x="12" y="8.0" width="3" height="1.6" fill="#1a73c9"/><rect x="12" y="5.5" width="3" height="1.6" fill="#1a73c9"/><rect x="12" y="3.0" width="3" height="1.6" fill="#1a73c9"/><rect x="12" y="0.5" width="3" height="1.6" fill="#1a73c9"/></svg>
<div class="t" style="left:1113px;top:695.5px;font-size:13px;color:#222;font-weight:normal;direction:rtl;transform:scaleX(0.7234);transform-origin:0 0;">الفرع الرئيسى</div>
<div class="t" style="left:1191.6px;top:695.5px;font-size:13px;color:#222;font-weight:normal;direction:rtl;transform:scaleX(0.7367);transform-origin:0 0;">الفرع</div>
<svg class="a" style="left:1219px;top:700px" width="12" height="12" viewBox="0 0 12 12"><rect width="12" height="12" rx="1" fill="#1a73c9"/><path d="M2.5 6L5 8.5L9.5 3.5" fill="none" stroke="#fff" stroke-width="1.5"/></svg>
<div class="t" style="left:1256.3px;top:695.5px;font-size:13px;color:#222;font-weight:normal;direction:rtl;transform:scaleX(0.8576);transform-origin:0 0;">الامانة</div>
<div class="t" style="left:1305px;top:695.5px;font-size:13px;color:#222;font-weight:normal;direction:rtl;transform:scaleX(0.7875);transform-origin:0 0;">الشركة</div>
<svg class="a" style="left:1342px;top:699px" width="13" height="15" viewBox="0 0 13 15"><path d="M6.5 15C3 11 0.5 8.5 0.5 6A6 6 0 0 1 12.5 6C12.5 8.5 10 11 6.5 15Z" fill="#1a73c9"/><circle cx="6.5" cy="6" r="2.2" fill="#fff"/></svg>
<div class="a" style="left:0px;top:720px;width:1366px;height:9px;background:linear-gradient(90deg,#fbefd0 0%,#faf0d6 42%,#dfe7f6 45%,#dde2f3 60%,#dcdcf0 70%,#dfe5f4 85%,#e3e8f5 100%)"></div>
<div class="a" style="left:0px;top:720px;width:1366px;height:1px;background:#c8ccd8"></div>
<div class="a" style="left:843px;top:722px;width:37px;height:7px;background:#f4dde6;border-radius:3px 3px 0 0"></div>
<div class="a" style="left:975px;top:722px;width:37px;height:7px;background:#eef0f6;border-radius:3px 3px 0 0"></div>
</body></html>
